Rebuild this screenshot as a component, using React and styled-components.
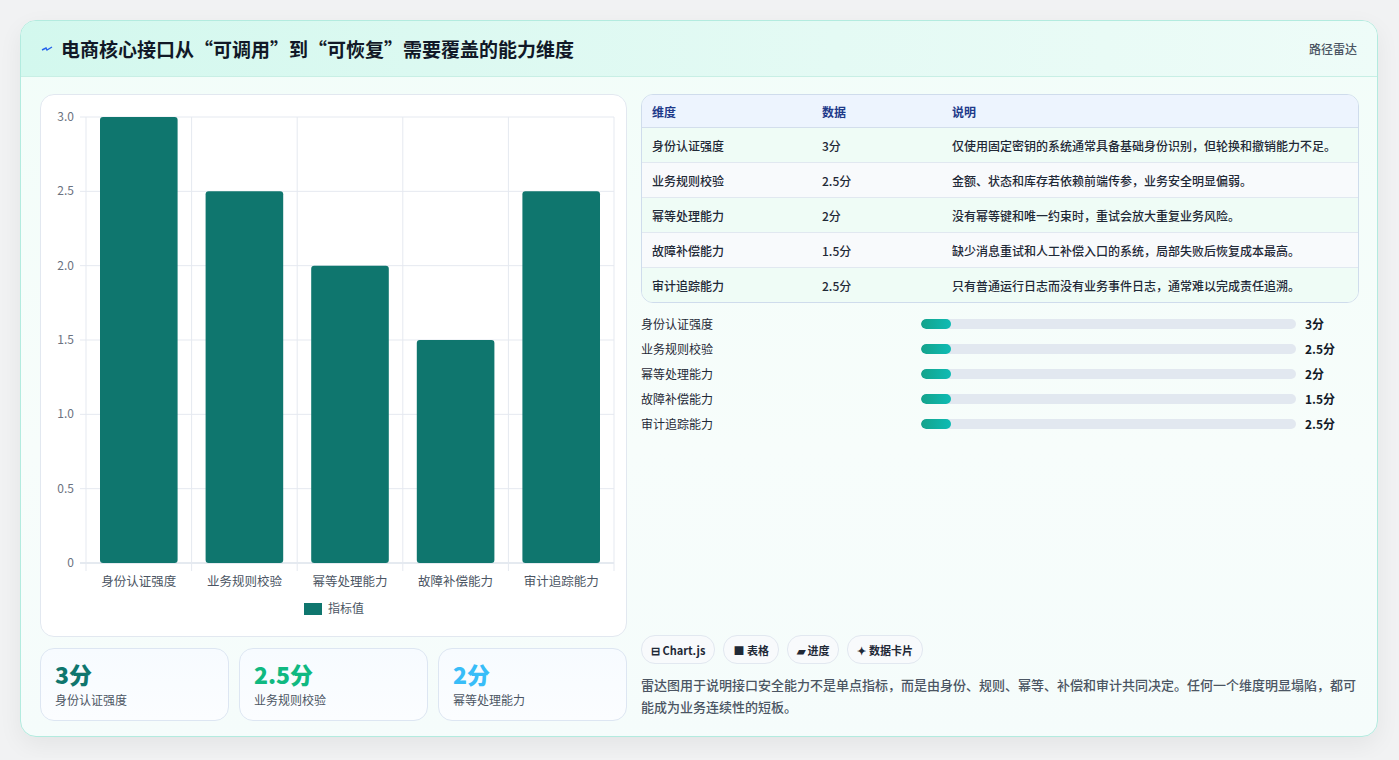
import React from 'react';
import styled, { createGlobalStyle } from 'styled-components';

const GlobalStyle = createGlobalStyle`
  html, body { margin: 0; padding: 0; background: #f1f2f3; }
  body { font-family: "Noto Sans CJK SC", "Noto Sans", sans-serif; }
`;

const data = [
  { name: '身份认证强度', value: 3, note: '仅使用固定密钥的系统通常具备基础身份识别，但轮换和撤销能力不足。' },
  { name: '业务规则校验', value: 2.5, note: '金额、状态和库存若依赖前端传参，业务安全明显偏弱。' },
  { name: '幂等处理能力', value: 2, note: '没有幂等键和唯一约束时，重试会放大重复业务风险。' },
  { name: '故障补偿能力', value: 1.5, note: '缺少消息重试和人工补偿入口的系统，局部失败后恢复成本最高。' },
  { name: '审计追踪能力', value: 2.5, note: '只有普通运行日志而没有业务事件日志，通常难以完成责任追溯。' },
];

const Page = styled.div`
  padding: 20px 21px 21px 20px;
`;

const Card = styled.div`
  height: 717px;
  box-sizing: border-box;
  border: 1px solid #b3ebdf;
  border-radius: 16px;
  background: linear-gradient(180deg, #f2fdf9 0%, #f7fdfb 60%, #f5fcfb 100%);
  box-shadow: 0 8px 24px rgba(0,0,0,0.06);
  display: flex;
  flex-direction: column;
  overflow: hidden;
`;

const Header = styled.div`
  height: 55px;
  flex: none;
  display: flex;
  align-items: center;
  justify-content: space-between;
  padding: 0 20px;
  background: linear-gradient(90deg, #d3f8ee 0%, #e4faf4 60%, #eefcf8 100%);
  border-bottom: 1px solid #c8efe5;
`;

const Title = styled.h1`
  margin: 0;
  font-size: 19px;
  font-weight: 700;
  color: #111827;
  display: flex;
  align-items: center;
  gap: 8px;
`;

const Tag = styled.span`
  font-size: 12px;
  color: #4b5563;
  font-weight: 500;
`;

const Body = styled.div`
  flex: 1;
  display: grid;
  grid-template-columns: 587px 1fr;
  gap: 14px;
  padding: 17px 18px 18px 19px;
  min-height: 0;
`;

const Col = styled.div`
  display: flex;
  flex-direction: column;
  min-height: 0;
`;

const ChartCard = styled.div`
  height: 543px;
  box-sizing: border-box;
  background: #fff;
  border: 1px solid #e2e8f0;
  border-radius: 14px;
`;

const Stats = styled.div`
  margin-top: 11px;
  display: grid;
  grid-template-columns: repeat(3, 1fr);
  gap: 10px;
`;

const Stat = styled.div`
  height: 73px;
  box-sizing: border-box;
  border: 1px solid #dde6f2;
  border-radius: 14px;
  background: linear-gradient(180deg, #f7fbff, #fbfdff);
  padding: 10px 14px;
`;

const StatValue = styled.div`
  font-size: 23px;
  font-weight: 800;
  line-height: 30px;
  color: ${p => p.color};
`;

const StatLabel = styled.div`
  font-size: 12px;
  color: #4b5563;
  margin-top: 2px;
`;

const Table = styled.table`
  width: 100%;
  border-collapse: separate;
  border-spacing: 0;
  border: 1px solid #cfdcec;
  border-radius: 12px;
  overflow: hidden;
  font-size: 12px;
  th {
    text-align: left;
    font-weight: 700;
    color: #1e3a8a;
    background: #edf4fe;
    height: 32px;
    padding: 0 10px;
    border-bottom: 1px solid #d3deec;
  }
  td {
    height: 34px;
    padding: 0 10px;
    color: #1f2937;
    font-weight: 500;
    border-bottom: 1px solid #e1e8f0;
  }
  tr:nth-child(odd) td { background: #effcf6; }
  tr:nth-child(even) td { background: #f8fafc; }
  tr:last-child td { border-bottom: none; }
`;

const Bars = styled.div`
  margin-top: 12px;
  display: flex;
  flex-direction: column;
  gap: 9px;
`;

const BarRow = styled.div`
  display: grid;
  grid-template-columns: 271px 375px 1fr;
  align-items: center;
  gap: 9px;
  height: 16px;
  font-size: 12px;
  color: #1f2937;
`;

const Track = styled.div`
  height: 10px;
  border-radius: 5px;
  background: #e2e8f0;
  overflow: hidden;
`;

const Fill = styled.div`
  height: 100%;
  border-radius: 5px;
  background: linear-gradient(90deg, #14a38b, #0ebbb4);
`;

const BarValue = styled.span`
  font-weight: 700;
  color: #111827;
`;

const Footer = styled.div`
  margin-top: auto;
`;

const Chips = styled.div`
  display: flex;
  gap: 8px;
`;

const Chip = styled.span`
  display: inline-flex;
  align-items: center;
  gap: 4px;
  height: 27px;
  padding: 0 9px;
  border-radius: 14px;
  border: 1px solid #e2e8f0;
  background: #f8fafc;
  font-size: 11px;
  font-weight: 700;
  color: #1f2937;
`;

const Desc = styled.p`
  margin: 10px 0 0;
  font-size: 13px;
  line-height: 22px;
  color: #4b5563;
  font-weight: 500;
`;

const BarChart = () => {
  const L = 45, R = 573, T = 22, B = 468;
  const cw = (R - L) / 5;
  const y = v => B - (v / 3) * (B - T);
  const ticks = [0, 0.5, 1, 1.5, 2, 2.5, 3];
  return (
    <svg width="585" height="541" style={{ display: 'block' }} fontFamily='"Noto Sans CJK SC", sans-serif'>
      {ticks.map(t => (
        <g key={t}>
          <line x1={L - 6} x2={R} y1={y(t)} y2={y(t)} stroke={t === 0 ? '#cbd5e1' : '#e5e9f0'} />
          <text x={L - 12} y={y(t) + 4} textAnchor="end" fontSize="12" fill="#6b7280">{t === 0 ? '0' : t.toFixed(1)}</text>
        </g>
      ))}
      {[0, 1, 2, 3, 4, 5].map(i => (
        <line key={i} x1={L + i * cw} x2={L + i * cw} y1={T} y2={B + 8} stroke="#e5e9f0" />
      ))}
      {data.map((d, i) => (
        <g key={d.name}>
          <rect x={L + i * cw + 14} y={y(d.value)} width={cw - 28} height={B - y(d.value)} rx="3" fill="#0f766e" />
          <text x={L + i * cw + cw / 2} y={B + 23} textAnchor="middle" fontSize="12.5" fill="#4b5563">{d.name}</text>
        </g>
      ))}
      <rect x="263" y="508" width="18" height="12" fill="#0f766e" />
      <text x="287" y="518" fontSize="12" fill="#4b5563">指标值</text>
    </svg>
  );
};

export default function App() {
  return (
    <>
      <GlobalStyle />
      <Page>
        <Card>
          <Header>
            <Title>
              <svg width="12" height="12" viewBox="0 0 12 12"><path d="M1 7 L5 5 L6 7 L11 4" stroke="#2563eb" strokeWidth="1.4" fill="none" /></svg>
              电商核心接口从“可调用”到“可恢复”需要覆盖的能力维度
            </Title>
            <Tag>路径雷达</Tag>
          </Header>
          <Body>
            <Col>
              <ChartCard><BarChart /></ChartCard>
              <Stats>
                <Stat><StatValue color="#0f766e">3分</StatValue><StatLabel>身份认证强度</StatLabel></Stat>
                <Stat><StatValue color="#10b981">2.5分</StatValue><StatLabel>业务规则校验</StatLabel></Stat>
                <Stat><StatValue color="#38bdf8">2分</StatValue><StatLabel>幂等处理能力</StatLabel></Stat>
              </Stats>
            </Col>
            <Col>
              <Table>
                <thead>
                  <tr><th style={{ width: 150 }}>维度</th><th style={{ width: 110 }}>数据</th><th>说明</th></tr>
                </thead>
                <tbody>
                  {data.map(d => (
                    <tr key={d.name}><td>{d.name}</td><td>{d.value}分</td><td>{d.note}</td></tr>
                  ))}
                </tbody>
              </Table>
              <Bars>
                {data.map(d => (
                  <BarRow key={d.name}>
                    <span>{d.name}</span>
                    <Track><Fill style={{ width: '8%' }} /></Track>
                    <BarValue>{d.value}分</BarValue>
                  </BarRow>
                ))}
              </Bars>
              <Footer>
                <Chips>
                  <Chip>⊟ Chart.js</Chip>
                  <Chip>■ 表格</Chip>
                  <Chip>▰ 进度</Chip>
                  <Chip>✦ 数据卡片</Chip>
                </Chips>
                <Desc>雷达图用于说明接口安全能力不是单点指标，而是由身份、规则、幂等、补偿和审计共同决定。任何一个维度明显塌陷，都可能成为业务连续性的短板。</Desc>
              </Footer>
            </Col>
          </Body>
        </Card>
      </Page>
    </>
  );
}
